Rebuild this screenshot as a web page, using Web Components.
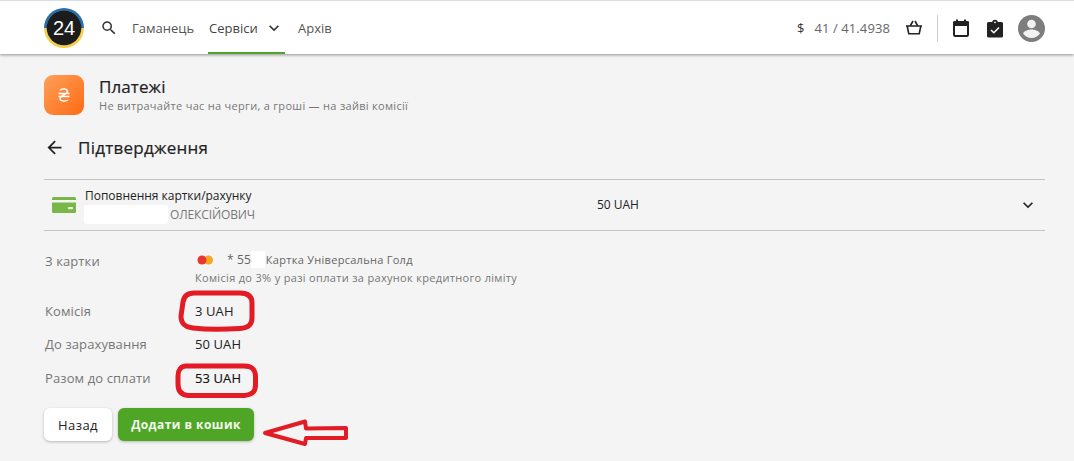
<!DOCTYPE html>
<html lang="uk">
<head>
<meta charset="utf-8">
<title>Платежі</title>
<style>
  html, body { margin: 0; padding: 0; }
  body {
    width: 1074px;
    height: 461px;
    overflow: hidden;
    background: #f4f4f4;
    font-family: "Open Sans", "Noto Sans", sans-serif;
    color: #222;
    position: relative;
  }
  main { display: block; padding: 21px 29px 0 44px; }
</style>
</head>
<body>
<app-header></app-header>
<main>
  <service-title heading="Платежі" sub="Не витрачайте час на черги, а гроші — на зайві комісії"></service-title>
  <step-heading>Підтвердження</step-heading>
  <summary-row amount="50 UAH"></summary-row>
  <detail-row label="З картки" top="21" height="50">
    <card-info></card-info>
  </detail-row>
  <detail-row label="Комісія" height="33">3 UAH</detail-row>
  <detail-row label="До зарахування" height="34">50 UAH</detail-row>
  <detail-row label="Разом до сплати" height="33" strong>53 UAH</detail-row>
  <action-bar></action-bar>
</main>
<red-marks></red-marks>

<script>
class AppHeader extends HTMLElement {
  constructor() {
    super();
    this.attachShadow({ mode: 'open' });
    this.shadowRoot.innerHTML = `
      <style>
        :host {
          display: flex;
          align-items: center;
          box-sizing: border-box;
          height: 54px;
          padding: 1px 29px 0 44px;
          background: #fff;
          border-top: 1px solid #dcdcdc;
          box-shadow: 0 1px 3px rgba(0,0,0,0.4);
          font-size: 13px;
          color: #555;
          position: relative;
        }
        svg { display: block; flex: none; }
        .logo { margin-top: -1px; }
        .search { margin-left: 16px; }
        nav { display: flex; align-items: center; height: 52px; margin-left: 14px; }
        nav a { display: flex; align-items: center; height: 100%; box-sizing: border-box; margin-top: -1px; }
        .active { margin: 0 13px 0 14px; width: 77px; color: #444; border-bottom: 2px solid #4fa62a; padding: 2px 0 0 1px; }
        .active svg { margin-left: 6px; }
        .right { margin-left: auto; display: flex; align-items: center; }
        .rate { margin-left: 10px; letter-spacing: .1px; color: #666; }
        .dollar { color: #333; }
        .basket { margin-left: 14px; }
        .sep { width: 1px; height: 27px; background: #ccc; margin: 0 14px 0 13px; }
        .clip { margin-left: 16px; }
        .avatar { margin-left: 14px; }
      </style>
      <svg class="logo" width="40" height="40" viewBox="0 0 40 40">
        <path d="M0 20a20 20 0 0 1 40 0z" fill="#2b6ea8"/>
        <path d="M0 20a20 20 0 0 0 40 0z" fill="#f3cf4d"/>
        <circle cx="20" cy="20" r="17.3" fill="#1c1c1c"/>
        <text x="20" y="27" text-anchor="middle" font-family="Liberation Sans" font-size="20" fill="#fff">24</text>
      </svg>
      <svg class="search" width="18" height="18" viewBox="0 0 24 24" fill="#333">
        <path d="M15.5 14h-.79l-.28-.27A6.47 6.47 0 0 0 16 9.5 6.5 6.5 0 1 0 9.5 16c1.61 0 3.09-.59 4.23-1.57l.27.28v.79l5 4.99L20.49 19zm-6 0C7.01 14 5 11.99 5 9.5S7.01 5 9.5 5 14 7.01 14 9.5 11.99 14 9.5 14z"/>
      </svg>
      <nav>
        <a>Гаманець</a>
        <a class="active">Сервіси
          <svg width="20" height="20" viewBox="0 0 24 24" fill="#333"><path d="M7.41 8.59 12 13.17l4.59-4.58L18 10l-6 6-6-6z"/></svg>
        </a>
        <a>Архів</a>
      </nav>
      <div class="right">
        <span class="dollar">$</span>
        <span class="rate">41 / 41.4938</span>
        <svg class="basket" width="20" height="20" viewBox="0 0 20 20" fill="none" stroke="#222" stroke-width="1.6" stroke-linejoin="round">
          <path d="M2 8h16M3.2 8l1.600 7.800h10.400L16.800 8M6.200 8l2.800-5M13.800 8l-2.800-5"/>
        </svg>
        <div class="sep"></div>
        <svg width="18" height="20" viewBox="0 0 18 20" fill="none">
          <rect x="2" y="4" width="14" height="14" rx="1.200" stroke="#222" stroke-width="2"/>
          <path d="M1 3.500h16V8H1z" fill="#222"/>
          <path d="M4 1.500h2v3H4zM12 1.500h2v3h-2z" fill="#222"/>
        </svg>
        <svg class="clip" width="18" height="20" viewBox="0 0 18 20">
          <path d="M2.500 4h13a1.500 1.500 0 0 1 1.500 1.500v12.500a1.500 1.500 0 0 1-1.500 1.500h-13A1.500 1.500 0 0 1 1 18V5.500A1.500 1.500 0 0 1 2.500 4z" fill="#222"/>
          <path d="M6.200 4.500a2.800 2.800 0 0 1 5.600 0z" fill="#222"/>
          <circle cx="9" cy="4.300" r=".9" fill="#fff"/>
          <path d="M5 12l2.800 2.700 5.200-5.200" fill="none" stroke="#fff" stroke-width="1.500"/>
        </svg>
        <svg class="avatar" width="27" height="27" viewBox="0 0 27 27">
          <circle cx="13.500" cy="13.500" r="13.500" fill="#7d7d7d"/>
          <circle cx="13.500" cy="9" r="4.300" fill="#f2f2f2"/>
          <path d="M5 18.500c1.500-3 5.500-4 8.500-4s7 1 8.500 4c-1.800 2.700-5 4.500-8.500 4.500S6.800 21.200 5 18.500z" fill="#f2f2f2"/>
        </svg>
      </div>
    `;
  }
}
customElements.define('app-header', AppHeader);

class ServiceTitle extends HTMLElement {
  constructor() {
    super();
    this.attachShadow({ mode: 'open' });
    this.shadowRoot.innerHTML = `
      <style>
        :host { display: flex; align-items: center; height: 40px; }
        .tile {
          width: 40px; height: 40px; border-radius: 9px; flex: none;
          background: linear-gradient(135deg, #ffa05a, #ff6a13);
          display: flex; align-items: center; justify-content: center;
        }
        .text { margin-left: 15px; }
        h1 { margin: 0; font-size: 17px; line-height: 22px; font-weight: 400; color: #222; letter-spacing: .1px; -webkit-text-stroke: .2px #222; }
        p { margin: 0; font-size: 11px; line-height: 16px; color: #777; letter-spacing: .3px; }
      </style>
      <div class="tile">
        <svg width="14" height="16" viewBox="0 0 14 16" fill="none" stroke="#fff" stroke-width="1.500">
          <path d="M3 3.500C4 1.500 10.500 1 10.500 4.500c0 3-7.500 4-7.500 7 0 3 6 3 8 1.500M1.500 6.500h11M1.500 9.500h11"/>
        </svg>
      </div>
      <div class="text"><h1></h1><p></p></div>
    `;
    this.shadowRoot.querySelector('h1').textContent = this.getAttribute('heading');
    this.shadowRoot.querySelector('p').textContent = this.getAttribute('sub');
  }
}
customElements.define('service-title', ServiceTitle);

class StepHeading extends HTMLElement {
  constructor() {
    super();
    this.attachShadow({ mode: 'open' });
    this.shadowRoot.innerHTML = `
      <style>
        :host {
          display: flex; align-items: center; height: 24px; margin-top: 20px;
          font-size: 17px; color: #222; letter-spacing: .25px;
          -webkit-text-stroke: .2px #222;
        }
        svg { display: block; margin-right: 13px; }
      </style>
      <svg width="21" height="21" viewBox="0 0 24 24" fill="#222"><path d="M20 11H7.830l5.590-5.590L12 4l-8 8 8 8 1.410-1.410L7.830 13H20z"/></svg>
      <slot></slot>
    `;
  }
}
customElements.define('step-heading', StepHeading);

class SummaryRow extends HTMLElement {
  constructor() {
    super();
    this.attachShadow({ mode: 'open' });
    this.shadowRoot.innerHTML = `
      <style>
        :host {
          display: flex; align-items: center; box-sizing: border-box;
          width: 1001px; height: 52px; margin-top: 20px;
          border-top: 1px solid #c4c4c4; border-bottom: 1px solid #c4c4c4;
          font-size: 12px; color: #222;
        }
        .icon { margin-left: 8px; flex: none; }
        .who { width: 512px; margin-left: 9px; line-height: 19px; }
        .title { letter-spacing: -.02px; }
        .name { display: flex; color: #777; letter-spacing: -.12px; }
        .mask { width: 84px; height: 19px; background: #fff; border-radius: 3px; margin: 0 2px 0 -1px; }
        .sum { width: 421px; margin-top: -1px; letter-spacing: -.05px; }
        .chev { flex: none; margin-top: -1px; }
      </style>
      <svg class="icon" width="24" height="16" viewBox="0 0 24 16">
        <path d="M0 1.500A1.500 1.500 0 0 1 1.500 0h21A1.500 1.500 0 0 1 24 1.500V3H0z" fill="#7ab648"/>
        <path d="M0 5.500h24v9a1.500 1.500 0 0 1-1.500 1.500h-21A1.500 1.500 0 0 1 0 14.500z" fill="#7ab648"/>
        <rect x="16" y="10" width="5" height="2.200" rx="1" fill="#f4f4f4"/>
      </svg>
      <div class="who">
        <div class="title">Поповнення картки/рахунку</div>
        <div class="name"><span class="mask"></span>ОЛЕКСІЙОВИЧ</div>
      </div>
      <div class="sum"></div>
      <svg class="chev" width="20" height="20" viewBox="0 0 24 24" fill="#222"><path d="M7.410 8.590 12 13.170l4.590-4.580L18 10l-6 6-6-6z"/></svg>
    `;
    this.shadowRoot.querySelector('.sum').textContent = this.getAttribute('amount');
  }
}
customElements.define('summary-row', SummaryRow);

class DetailRow extends HTMLElement {
  constructor() {
    super();
    this.attachShadow({ mode: 'open' });
    this.shadowRoot.innerHTML = `
      <style>
        :host { display: flex; align-items: flex-start; font-size: 13px; letter-spacing: .1px; color: #222; padding-left: 1px; }
        :host([strong]) .value { color: #111; -webkit-text-stroke: .15px #111; }
        .label { width: 150px; flex: none; color: #777; line-height: 18px; padding-top: 7px; }
        .value { line-height: 18px; padding-top: 7px; }
      </style>
      <div class="label"></div>
      <div class="value"><slot></slot></div>
    `;
    this.shadowRoot.querySelector('.label').textContent = this.getAttribute('label');
    this.style.height = this.getAttribute('height') + 'px';
    if (this.hasAttribute('top')) this.style.paddingTop = (this.getAttribute('top') - 7) + 'px';
  }
}
customElements.define('detail-row', DetailRow);

class CardInfo extends HTMLElement {
  constructor() {
    super();
    this.attachShadow({ mode: 'open' });
    this.shadowRoot.innerHTML = `
      <style>
        :host { display: block; font-size: 11px; color: #666; margin-top: -1px; letter-spacing: .28px; }
        .line { display: flex; align-items: center; height: 17px; }
        svg { display: block; margin: 0 0 0 2px; }
        .num { margin-left: 13px; font-size: 12px; letter-spacing: .1px; }
        .mask { width: 14px; height: 17px; background: #fff; margin: 0 1px 0 0; }
        .note { line-height: 18px; color: #777; margin-top: 1px; letter-spacing: .32px; }
      </style>
      <div class="line">
        <svg width="17" height="10" viewBox="0 0 17 10"><circle cx="11.500" cy="5" r="4.500" fill="#f5a623"/><circle cx="5" cy="5" r="4.500" fill="#e8352d"/></svg>
        <span class="num">* 55</span><span class="mask"></span>
        <span>Картка Універсальна Голд</span>
      </div>
      <div class="note">Комісія до 3% у разі оплати за рахунок кредитного ліміту</div>
    `;
  }
}
customElements.define('card-info', CardInfo);

class ActionBar extends HTMLElement {
  constructor() {
    super();
    this.attachShadow({ mode: 'open' });
    this.shadowRoot.innerHTML = `
      <style>
        :host { display: flex; gap: 6px; margin-top: 13px; }
        button {
          font: inherit; height: 33px; border: 0; border-radius: 6px;
          box-shadow: 0 1px 3px rgba(0,0,0,0.25); padding: 0;
        }
        .back { width: 68px; background: #fff; color: #222; font-size: 13px; letter-spacing: .4px; }
        .add { width: 136px; background: #4fa626; color: #f4f9ee; font-size: 12px; font-weight: 700; letter-spacing: .45px; }
      </style>
      <button class="back">Назад</button>
      <button class="add">Додати в кошик</button>
    `;
  }
}
customElements.define('action-bar', ActionBar);

// red annotations drawn on top of the screenshot
class RedMarks extends HTMLElement {
  constructor() {
    super();
    this.attachShadow({ mode: 'open' });
    this.shadowRoot.innerHTML = `
      <style>
        :host { display: block; position: absolute; left: 0; top: 0; width: 1074px; height: 461px; pointer-events: none; }
        svg { display: block; }
      </style>
      <svg width="1074" height="461" fill="none" stroke="#e21b25" stroke-width="5" stroke-linejoin="round">
        <path d="M194 293H240C248 293 252 296 252 303V318C252 325 248 328 240 328.500 225 329.500 205 329.500 193 328 185 327 181 324 181 316L183 302C184 296 188 293 194 293z"/>
        <path d="M186 366H244C252 366 255 369 255.500 376V385C255.500 392 252 395 244 395.500H188C181 395 178 391 178 384V376C178 370 181 366 186 366z"/>
        <path stroke-width="4" d="M265 433L305 421.500 306 428.500 346 428 346 438 306 438 305 444z"/>
      </svg>
    `;
  }
}
customElements.define('red-marks', RedMarks);
</script>
</body>
</html>
